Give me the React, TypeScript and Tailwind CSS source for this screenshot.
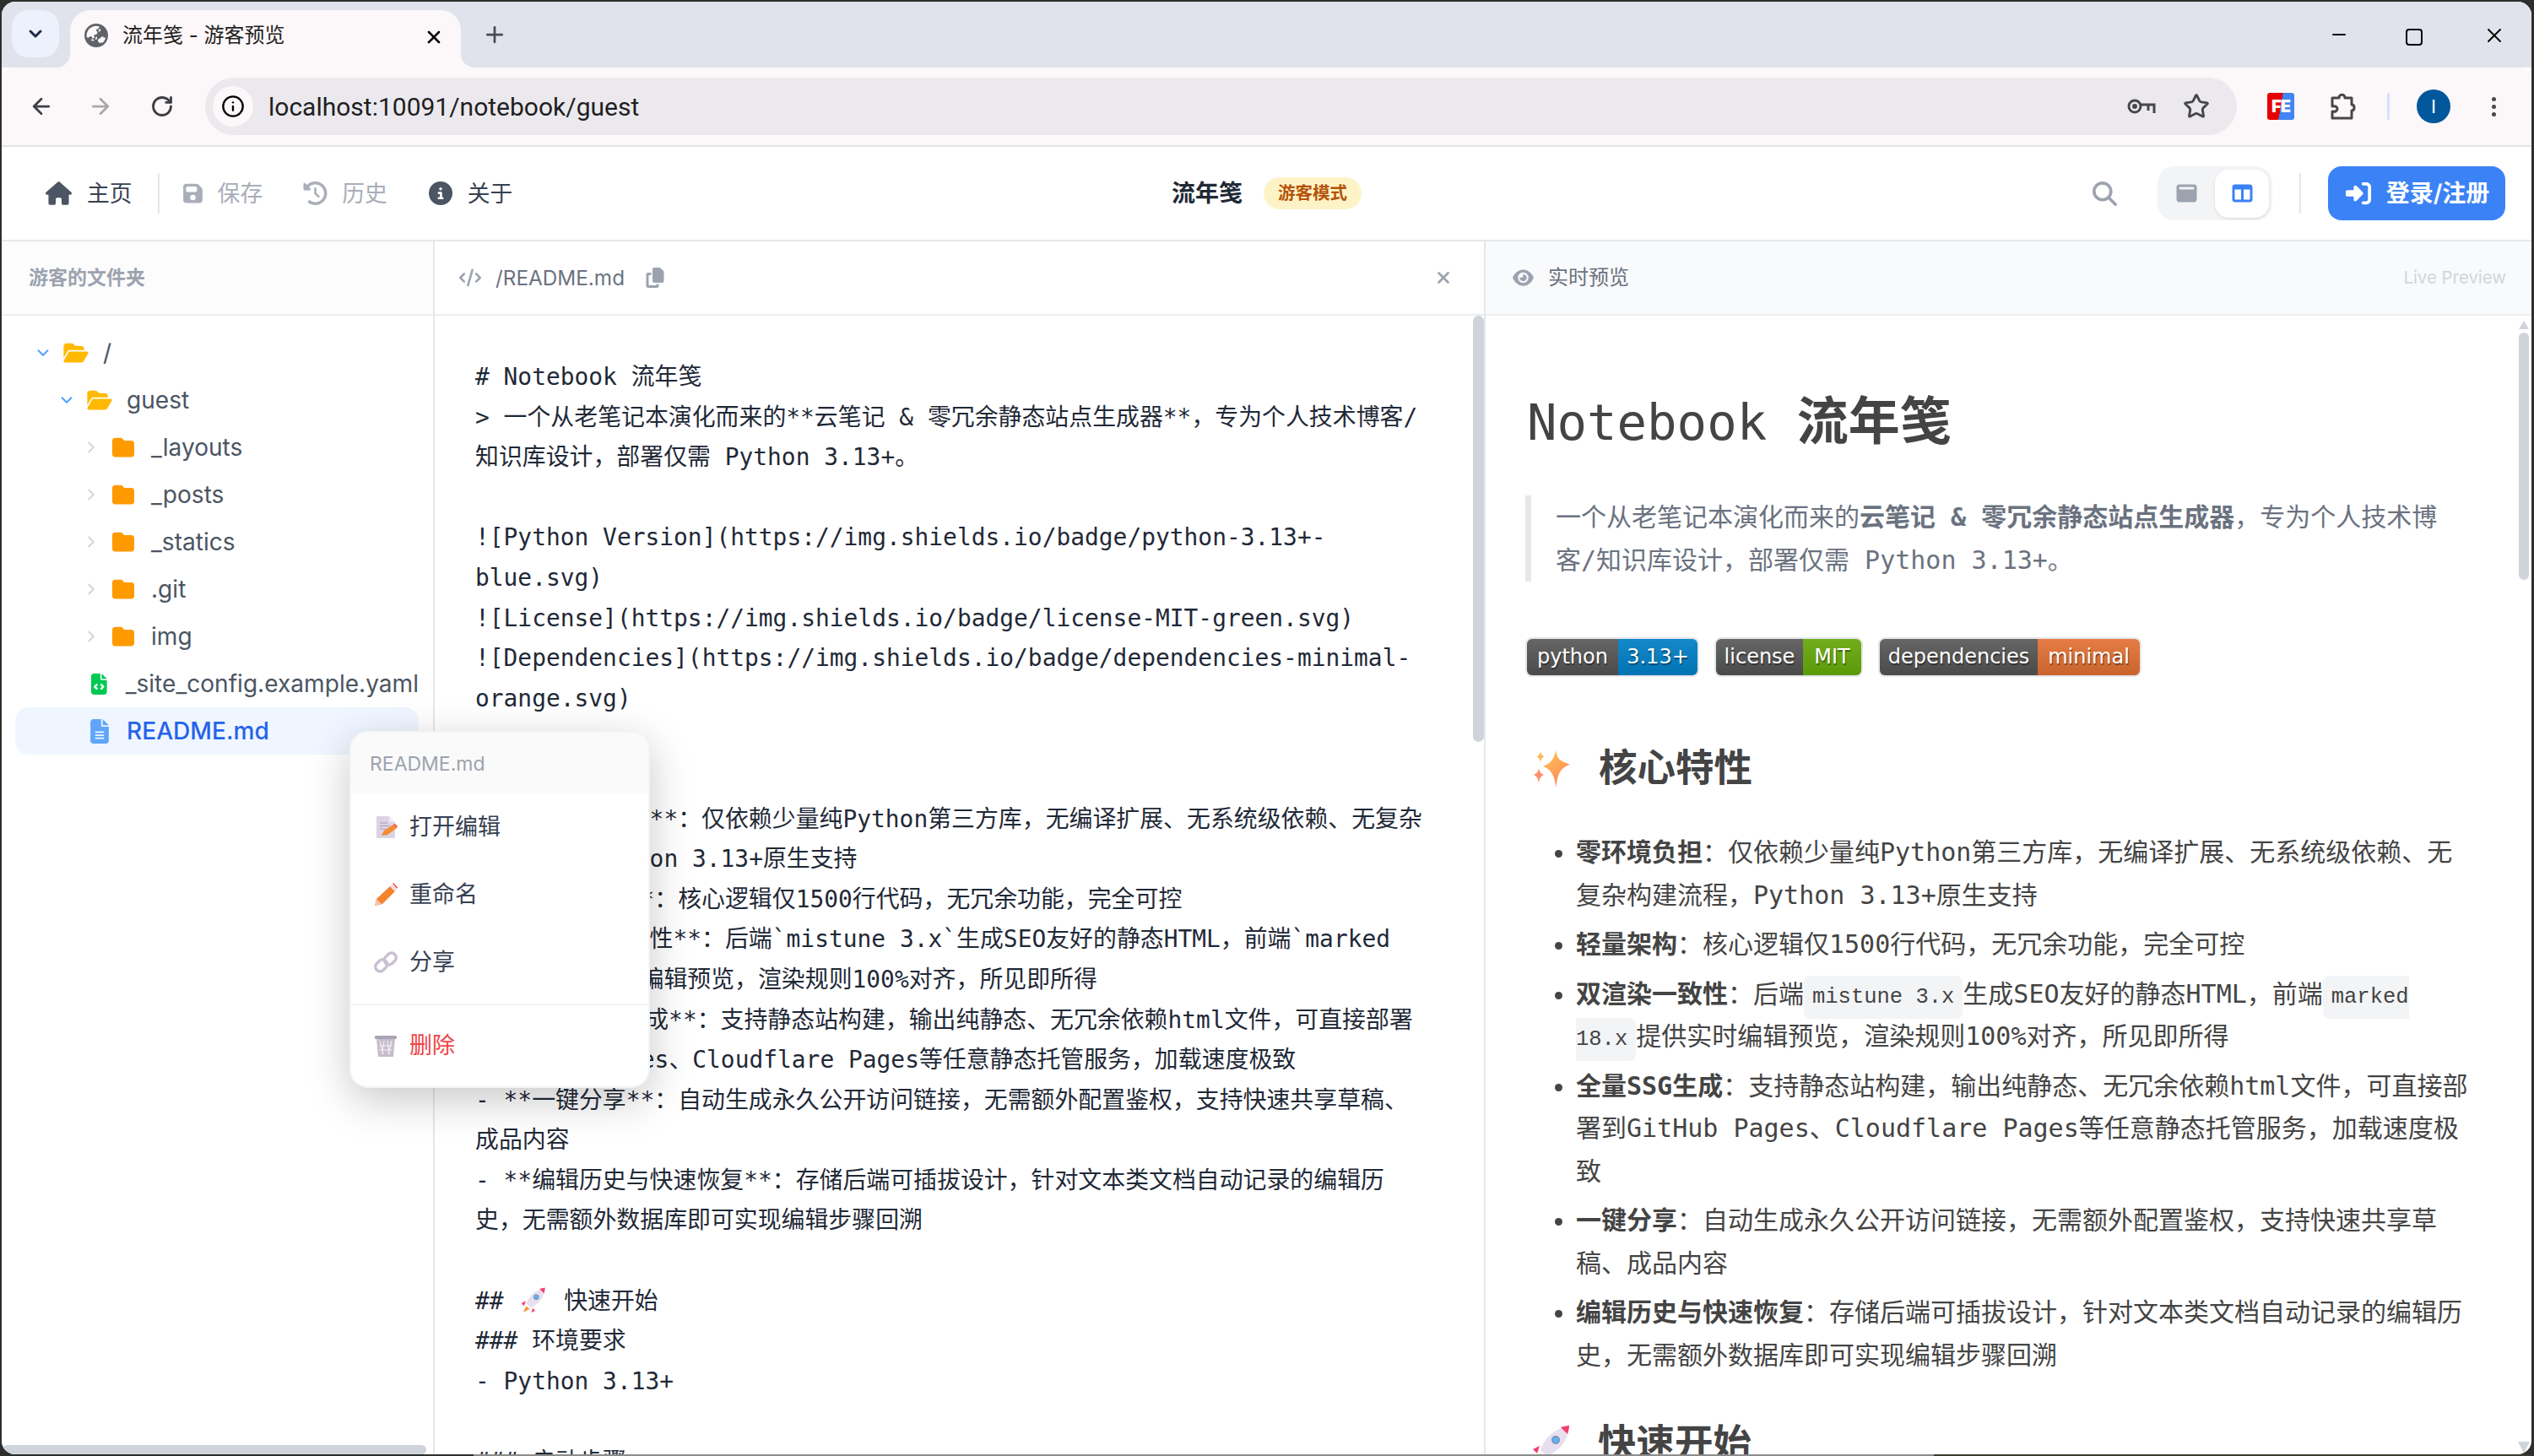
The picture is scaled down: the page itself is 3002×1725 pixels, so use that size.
import { ChevronDown, ChevronRight, ArrowLeft, ArrowRight, RotateCw, Info, Star, Plus, X, Minus } from 'lucide-react'
import {
  FaHouse,
  FaFloppyDisk,
  FaClockRotateLeft,
  FaCircleInfo,
  FaMagnifyingGlass,
  FaRightToBracket,
  FaCode,
  FaCopy,
  FaEye,
  FaFolder,
  FaFolderOpen,
  FaFileCode,
  FaFileLines,
  FaWindowMaximize,
  FaTableColumns,
  FaXmark,
  FaEarthAsia,
} from 'react-icons/fa6'
import type { ReactNode } from 'react'

function Sparkle({ className }: { className?: string }) {
  return (
    <svg viewBox="0 0 44 44" className={className}>
      <defs>
        <linearGradient id="spark" x1="0" y1="0" x2="0.6" y2="1">
          <stop offset="0" stopColor="#fdc64e" />
          <stop offset="1" stopColor="#ff8a5c" />
        </linearGradient>
      </defs>
      <path d="M27 0c1.600 9 4 12.500 17 16.500-10 4.500-14.500 8-16.500 27.500C25 28 21 22 12 19c9-4 13-8 15-19z" fill="url(#spark)" />
      <path d="M9 1c.7 3.500 1.500 4.800 4.500 6.500C10.500 9 9.800 10.500 9 14 8.200 10.500 7.500 9 4.500 7.500 7.500 5.800 8.300 4.500 9 1z" fill="#fdb85a" />
      <path d="M7 21c.9 4.500 2 6 6 8-4 2-5.100 4-6 10-.9-6-2-8-6-10 4-2 5.100-3.500 6-8z" fill="#ff8f6b" />
    </svg>
  )
}

function Rocket({ className }: { className?: string }) {
  return (
    <svg viewBox="0 0 46 46" className={className}>
      <path d="M4 46l6-12 6 6z" fill="#f59a3c" />
      <path d="M9 25L1 29l5 5z" fill="#f43f6e" />
      <path d="M22 38l-3 8 7-3z" fill="#f43f6e" />
      <path d="M10 30C14 16 26 5 44 1c-1 18-12 30-26 36z" fill="#e7dfee" />
      <path d="M34 3c3-1 7-2 10-2 0 3-1 7-2 10z" fill="#f43f6e" />
      <circle cx="28" cy="18" r="5" fill="#7c8db5" />
      <circle cx="28" cy="18" r="3.500" fill="#5cb3f7" />
    </svg>
  )
}

function DocPen() {
  return (
    <svg viewBox="0 0 28 28" className="h-[28px] w-[28px]">
      <path d="M3 1h15l7 7v19H3z" fill="#dcd3e4" />
      <path d="M18 1l7 7h-7z" fill="#f1ecf5" />
      <path d="M7 9h9M7 12.500h12M7 16h7" stroke="#a89bb5" strokeWidth="1.200" />
      <path d="M9 24l3-6 11-7 4 4-11 8z" fill="#f58a2e" />
      <path d="M23 11l2-1 3 3-1 2z" fill="#f4573f" />
    </svg>
  )
}

function Pencil() {
  return (
    <svg viewBox="0 0 28 28" className="h-[28px] w-[28px]">
      <path d="M1 27l2-8L19 4l6 6-15 15z" fill="#f5842e" />
      <path d="M1 27l2-8 6 6z" fill="#f3c4b3" />
      <path d="M19 4l2-2 6 6-2 2z" fill="#e8dfe9" />
      <path d="M22 1l1-1 5 5-1 2z" fill="#f4573f" />
    </svg>
  )
}

function ChainLink() {
  return (
    <svg viewBox="0 0 28 28" className="h-[28px] w-[28px]" fill="none" stroke="#c9bfd2" strokeWidth="3.500">
      <rect x="1" y="13" width="15" height="11" rx="5.500" transform="rotate(-45 8 18)" />
      <rect x="12" y="4" width="15" height="11" rx="5.500" transform="rotate(-45 20 10)" />
    </svg>
  )
}

function Basket() {
  return (
    <svg viewBox="0 0 28 28" className="h-[28px] w-[28px]">
      <path d="M3 5h22l-2 22H5z" fill="#c5bdcd" />
      <path d="M7 8l4 16M12 8l-2 16M16 8l2 16M21 8l-4 16M6 14h16M6 19h16" stroke="#f1edf4" strokeWidth="1.200" />
      <rect x="1" y="2" width="26" height="4" rx="1.500" fill="#aaa2b5" />
    </svg>
  )
}

type TreeItem = {
  name: string
  kind: 'root' | 'open' | 'closed' | 'yaml' | 'md'
  pad: string
}

const tree: TreeItem[] = [
  { name: '/', kind: 'root', pad: 'pl-[38px]' },
  { name: 'guest', kind: 'open', pad: 'pl-[66px]' },
  { name: '_layouts', kind: 'closed', pad: 'pl-[100px]' },
  { name: '_posts', kind: 'closed', pad: 'pl-[100px]' },
  { name: '_statics', kind: 'closed', pad: 'pl-[100px]' },
  { name: '.git', kind: 'closed', pad: 'pl-[100px]' },
  { name: 'img', kind: 'closed', pad: 'pl-[100px]' },
  { name: '_site_config.example.yaml', kind: 'yaml', pad: 'pl-[106px]' },
]

function TreeRow({ item }: { item: TreeItem }) {
  if (item.kind === 'root' || item.kind === 'open') {
    return (
      <div className={`flex h-[56px] items-center ${item.pad}`}>
        <ChevronDown className="mr-[12px] h-[22px] w-[22px] text-blue-400" strokeWidth={2.2} />
        <FaFolderOpen className="mr-[16px] h-[26px] w-[32px] text-amber-400" />
        <span>{item.name}</span>
      </div>
    )
  }
  if (item.kind === 'closed') {
    return (
      <div className={`flex h-[56px] items-center ${item.pad}`}>
        <ChevronRight className="mr-[13px] -ml-[5px] h-[22px] w-[22px] text-gray-300" strokeWidth={2} />
        <FaFolder className="mr-[19px] h-[26px] w-[28px] text-amber-500" />
        <span>{item.name}</span>
      </div>
    )
  }
  return (
    <div className={`flex h-[56px] items-center whitespace-nowrap ${item.pad}`}>
      <FaFileCode className="mr-[22px] h-[29px] w-[22px] text-green-500" />
      <span>{item.name}</span>
    </div>
  )
}

const editorLines: ReactNode[] = [
  '# Notebook 流年笺',
  '> 一个从老笔记本演化而来的**云笔记 & 零冗余静态站点生成器**，专为个人技术博客/',
  '知识库设计，部署仅需 Python 3.13+。',
  '',
  '![Python Version](https://img.shields.io/badge/python-3.13+-',
  'blue.svg)',
  '![License](https://img.shields.io/badge/license-MIT-green.svg)',
  '![Dependencies](https://img.shields.io/badge/dependencies-minimal-',
  'orange.svg)',
  '',
  '## ✦ 核心特性',
  '- **零环境负担**：仅依赖少量纯Python第三方库，无编译扩展、无系统级依赖、无复杂',
  '构建流程，Python 3.13+原生支持',
  '- **轻量架构**：核心逻辑仅1500行代码，无冗余功能，完全可控',
  '- **双渲染一致性**：后端`mistune 3.x`生成SEO友好的静态HTML，前端`marked',
  '18.x`提供实时编辑预览，渲染规则100%对齐，所见即所得',
  '- **全量SSG生成**：支持静态站构建，输出纯静态、无冗余依赖html文件，可直接部署',
  '到GitHub Pages、Cloudflare Pages等任意静态托管服务，加载速度极致',
  '- **一键分享**：自动生成永久公开访问链接，无需额外配置鉴权，支持快速共享草稿、',
  '成品内容',
  '- **编辑历史与快速恢复**：存储后端可插拔设计，针对文本类文档自动记录的编辑历',
  '史，无需额外数据库即可实现编辑步骤回溯',
  '',
  <>
    ## <Rocket className="mx-[4px] inline h-[30px] w-[30px] align-[-4px]" /> 快速开始
  </>,
  '### 环境要求',
  '- Python 3.13+',
  '',
  '### 启动步骤',
]

const badges = [
  { left: 'python', right: '3.13+', leftW: 'w-[108px]', rightW: 'w-[94px]', rightBg: 'bg-gradient-to-b from-[#1488c9] to-[#0073b3]' },
  { left: 'license', right: 'MIT', leftW: 'w-[103px]', rightW: 'w-[69px]', rightBg: 'bg-gradient-to-b from-[#72ad1c] to-[#5a9a06]' },
  { left: 'dependencies', right: 'minimal', leftW: 'w-[187px]', rightW: 'w-[121px]', rightBg: 'bg-gradient-to-b from-[#e57c44] to-[#c9642e]' },
]

const code = 'rounded-[8px] bg-gray-100 px-[10px] py-[11px] text-[25.5px] leading-none'

export default function App() {
  return (
    <div
      lang="zh-CN"
      className="flex h-[1725px] w-[3002px] flex-col overflow-hidden bg-[#2e2e2c] pt-[2px] pl-[2px] pr-[3px] text-[#1f2937] [font-family:'Inter','Noto_Sans_CJK_SC',sans-serif]"
    >
      <div className="flex h-[1721px] shrink-0 flex-col overflow-hidden rounded-[16px] bg-white">
        {/* tab strip */}
        <div className="flex h-[78px] shrink-0 items-start bg-[#e0e3eb]">
          <div className="mt-[10px] ml-[12px] flex h-[56px] w-[56px] items-center justify-center rounded-[20px] bg-[#edf1fc]">
            <ChevronDown className="h-[24px] w-[24px] text-[#1f2a44]" strokeWidth={3} />
          </div>
          <div className="relative mt-[10px] ml-[13px] flex h-[68px] w-[463px] items-center rounded-t-[24px] bg-[#fcf7f8] pb-[8px]">
            <span className="absolute -bottom-0 -left-[16px] h-[16px] w-[16px] bg-[#fcf7f8]">
              <span className="block h-full w-full rounded-br-[16px] bg-[#e0e3eb]" />
            </span>
            <span className="absolute -bottom-0 -right-[16px] h-[16px] w-[16px] bg-[#fcf7f8]">
              <span className="block h-full w-full rounded-bl-[16px] bg-[#e0e3eb]" />
            </span>
            <FaEarthAsia className="ml-[17px] h-[28px] w-[28px] text-[#5f6368]" />
            <span className="ml-[17px] text-[24px] text-[#1f1f1f]">流年笺 - 游客预览</span>
            <X className="absolute right-[20px] top-[20px] h-[24px] w-[24px] text-black" strokeWidth={2.6} />
          </div>
          <Plus className="mt-[24px] ml-[25px] h-[30px] w-[30px] text-[#474b57]" strokeWidth={2.2} />
          <div className="ml-auto flex items-center">
            <Minus className="mt-[24px] mr-[67px] h-[24px] w-[24px] text-black" strokeWidth={2} />
            <div className="mt-[29px] mr-[71px] h-[20px] w-[20px] rounded-[4px] border-2 border-black" />
            <X className="mt-[26px] mr-[30px] h-[28px] w-[28px] text-black" strokeWidth={1.6} />
          </div>
        </div>

        {/* browser toolbar */}
        <div className="flex h-[94px] shrink-0 items-center rounded-t-[14px] border-b-2 border-[#e3e1e6] bg-[#fcf7f8]">
          <ArrowLeft className="ml-[32px] h-[30px] w-[30px] text-[#3c3f46]" strokeWidth={2.2} />
          <ArrowRight className="ml-[40px] h-[30px] w-[30px] text-[#a8a8ab]" strokeWidth={2.2} />
          <RotateCw className="ml-[44px] h-[28px] w-[28px] text-[#3c3f46]" strokeWidth={2.4} />
          <div className="ml-[37px] flex h-[68px] w-[2407px] items-center rounded-full bg-[#ebe9ee]">
            <div className="ml-[9px] flex h-[48px] w-[48px] items-center justify-center rounded-full bg-[#fcf7f8]">
              <Info className="h-[28px] w-[28px] text-black" strokeWidth={2} />
            </div>
            <span className="ml-[18px] text-[30px] text-[#1f1f1f] [font-family:'Roboto',sans-serif]">
              localhost:10091/notebook/guest
            </span>
            <svg viewBox="0 0 34 22" className="ml-auto h-[22px] w-[34px]" fill="none" stroke="#474747" strokeWidth="3">
              <circle cx="9" cy="11" r="7" />
              <circle cx="9" cy="11" r="1.500" fill="#474747" />
              <path d="M16 9h16v10M25 9v7" />
            </svg>
            <Star className="mr-[32px] ml-[32px] h-[32px] w-[32px] text-[#474747]" strokeWidth={2.2} />
          </div>
          <div className="ml-[36px] flex h-[32px] w-[32px] items-center justify-center rounded-[3px] bg-[linear-gradient(100deg,#e60000_50%,#4285f4_50%)] text-[20px] leading-none font-black tracking-[-1px] text-white">
            FE
          </div>
          <svg viewBox="0 0 32 32" className="ml-[42px] h-[32px] w-[32px]" fill="none" stroke="#474747" strokeWidth="3" strokeLinejoin="round">
            <path d="M3 6h8c0-5 7-5 7 0h8v8c4 0 4 7 0 7v9H3v-8c4 1 6-1 6-3s-2-4-6-3z" />
          </svg>
          <div className="ml-[36px] h-[32px] w-[3px] rounded-full bg-[#d3e3fd]" />
          <div className="ml-[32px] flex h-[40px] w-[40px] items-center justify-center rounded-full bg-[#00579c] text-[22px] text-white [font-family:'Roboto',sans-serif]">
            I
          </div>
          <div className="ml-[49px] flex flex-col gap-[4px]">
            <span className="h-[5px] w-[5px] rounded-full bg-[#474747]" />
            <span className="h-[5px] w-[5px] rounded-full bg-[#474747]" />
            <span className="h-[5px] w-[5px] rounded-full bg-[#474747]" />
          </div>
        </div>

        {/* app navbar */}
        <div className="grid h-[112px] shrink-0 grid-cols-[1fr_auto_1fr] items-center border-b-2 border-[#e5e7eb] bg-white text-[26.800px] text-[#374151] shadow-[0_2px_3px_rgba(0,0,0,0.03)]">
          <div className="flex items-center pl-[52px]">
            <FaHouse className="h-[28px] w-[31px] text-[#4b5563]" />
            <span className="ml-[18px]">主页</span>
            <div className="ml-[30px] h-[48px] w-[2px] bg-[#e5e7eb]" />
            <FaFloppyDisk className="ml-[27px] h-[26px] w-[25px] text-[#a9aeb8]" />
            <span className="ml-[17px] text-[#a9aeb8]">保存</span>
            <FaClockRotateLeft className="ml-[48px] h-[28px] w-[29px] text-[#a9aeb8]" />
            <span className="ml-[17px] text-[#a9aeb8]">历史</span>
            <FaCircleInfo className="ml-[49px] h-[28px] w-[28px] text-[#4b5563]" />
            <span className="ml-[18px]">关于</span>
          </div>
          <div className="flex items-center">
            <span className="text-[28px] font-bold text-[#1f2937]">流年笺</span>
            <span className="ml-[25px] flex h-[38px] w-[116px] items-center justify-center rounded-full bg-[#fef3c7] text-[20.500px] font-bold text-[#b45309]">
              游客模式
            </span>
          </div>
          <div className="flex items-center justify-end pr-[31px]">
            <FaMagnifyingGlass className="h-[29px] w-[29px] text-[#9ca3af]" />
            <div className="ml-[48px] flex h-[64px] w-[136px] items-center rounded-[20px] bg-[#f3f4f6]">
              <div className="flex h-[57px] w-[68px] items-center justify-center">
                <FaWindowMaximize className="h-[24px] w-[25px] text-[#9ca3af]" />
              </div>
              <div className="flex h-[57px] w-[64px] items-center justify-center rounded-[16px] bg-white shadow-sm">
                <FaTableColumns className="h-[24px] w-[25px] text-[#3b82f6]" />
              </div>
            </div>
            <div className="ml-[32px] h-[48px] w-[2px] bg-[#e5e7eb]" />
            <div className="ml-[32px] flex h-[64px] w-[210px] items-center justify-center rounded-[16px] bg-[#3b82f6] text-[28px] font-semibold text-white">
              <FaRightToBracket className="mr-[16px] h-[30px] w-[34px]" />
              登录/注册
            </div>
          </div>
        </div>

        {/* panels */}
        <div className="flex min-h-0 flex-1">
          <aside className="relative flex w-[513px] shrink-0 flex-col border-r-2 border-[#e5e7eb] bg-white">
            <div className="flex h-[88px] shrink-0 items-center border-b-2 border-[#eceef1] bg-[#fcfcfd] pl-[32px] text-[23px] font-semibold text-[#9ca3af]">
              游客的文件夹
            </div>
            <div className="pt-[16px] pr-[17px] text-[28.100px] text-[#4b5563]">
              {tree.map((item) => (
                <TreeRow key={item.name} item={item} />
              ))}
              <div className="ml-[16px] flex h-[56px] items-center rounded-[16px] bg-[#eff6ff] pl-[89px] font-medium text-[#2563eb]">
                <FaFileLines className="mr-[21px] h-[29px] w-[22px] text-[#60a5fa]" />
                README.md
              </div>
            </div>
            <div className="mt-auto ml-[1px] mr-[8px] h-[11px] rounded-full bg-[#cfd3da]" />
          </aside>

          <section className="relative flex w-[1243px] shrink-0 flex-col">
            <div className="flex h-[88px] shrink-0 items-center border-b-2 border-[#eceef1] bg-white pl-[29px] text-[#6b7280]">
              <FaCode className="h-[24px] w-[26px] text-[#9ca3af]" />
              <span className="ml-[17px] text-[24.300px]">/README.md</span>
              <FaCopy className="ml-[25px] h-[24px] w-[22px] text-[#9ca3af]" />
              <FaXmark className="mr-[37px] ml-auto h-[22px] w-[22px] text-[#9ca3af]" />
            </div>
            <div className="relative min-h-0 flex-1 overflow-hidden pt-[49px] pl-[48px] text-[27.900px] leading-[47.600px] text-[#1f2937] [font-family:'DejaVu_Sans_Mono','Noto_Sans_CJK_SC',monospace]">
              {editorLines.map((line, i) => (
                <div key={i} className="h-[47.600px] whitespace-pre">
                  {line}
                </div>
              ))}
              <div className="absolute top-0 right-0 h-[505px] w-[13px] rounded-full bg-[#cfd3da]" />
            </div>
          </section>

          <section className="relative flex min-w-0 flex-1 flex-col border-l-2 border-[#e5e7eb]">
            <div className="flex h-[88px] shrink-0 items-center border-b-2 border-[#eceef1] bg-[#f9fafb] pl-[31px] pr-[30px]">
              <FaEye className="h-[22px] w-[27px] text-[#9ca3af]" />
              <span className="ml-[16px] text-[24px] text-[#6b7280]">实时预览</span>
              <span className="ml-auto text-[20.400px] text-[#d1d5db]">Live Preview</span>
            </div>
            <div className="relative min-h-0 flex-1 overflow-hidden pl-[49px] text-[30px] leading-[50.500px] text-[#444444] [font-family:'DejaVu_Sans_Mono','Noto_Sans_CJK_SC',monospace]">
              <h1 className="mt-[90px] h-[72px] text-[59px] leading-[72px] whitespace-pre">
                Notebook <span className="text-[61px] font-bold">流年笺</span>
              </h1>
              <blockquote className="mt-[51px] -ml-[2px] border-l-[7px] border-[#e5e7eb] pl-[29px] leading-[51px] whitespace-pre text-[#6b7280]">
                一个从老笔记本演化而来的<strong>云笔记 &amp; 零冗余静态站点生成器</strong>，专为个人技术博
                <br />
                客/知识库设计，部署仅需 Python 3.13+。
              </blockquote>
              <div className="mt-[66px] -ml-[2px] flex h-[47px] gap-[18px] text-[24px] text-white [font-family:'DejaVu_Sans',sans-serif] [text-shadow:1px_2px_1px_rgba(0,0,0,0.4)]">
                {badges.map((b) => (
                  <div key={b.left} className="flex overflow-hidden rounded-[8px] border-2 border-[#e5e7eb]">
                    <div className={`flex items-center justify-center bg-gradient-to-b from-[#666666] to-[#4a4a4a] ${b.leftW}`}>{b.left}</div>
                    <div className={`flex items-center justify-center ${b.rightBg} ${b.rightW}`}>{b.right}</div>
                  </div>
                ))}
              </div>
              <h2 className="mt-[79px] flex h-[60px] items-center text-[45.500px] font-bold">
                <Sparkle className="mr-[34px] ml-[7px] h-[44px] w-[44px]" />
                <span>核心特性</span>
              </h2>
              <ul className="mt-[44px] list-disc space-y-[8px] pl-[58px] whitespace-pre">
                <li>
                  <strong>零环境负担</strong>：仅依赖少量纯Python第三方库，无编译扩展、无系统级依赖、无
                  <br />
                  复杂构建流程，Python 3.13+原生支持
                </li>
                <li>
                  <strong>轻量架构</strong>：核心逻辑仅1500行代码，无冗余功能，完全可控
                </li>
                <li>
                  <strong>双渲染一致性</strong>：后端<code className={code}>mistune 3.x</code>生成SEO友好的静态HTML，前端
                  <code className={code}>
                    marked
                    <br />
                    18.x
                  </code>
                  提供实时编辑预览，渲染规则100%对齐，所见即所得
                </li>
                <li>
                  <strong>全量SSG生成</strong>：支持静态站构建，输出纯静态、无冗余依赖html文件，可直接部
                  <br />
                  署到GitHub Pages、Cloudflare Pages等任意静态托管服务，加载速度极
                  <br />致
                </li>
                <li>
                  <strong>一键分享</strong>：自动生成永久公开访问链接，无需额外配置鉴权，支持快速共享草
                  <br />
                  稿、成品内容
                </li>
                <li>
                  <strong>编辑历史与快速恢复</strong>：存储后端可插拔设计，针对文本类文档自动记录的编辑历
                  <br />
                  史，无需额外数据库即可实现编辑步骤回溯
                </li>
              </ul>
              <h2 className="mt-[50px] flex h-[60px] items-center text-[45.500px] font-bold">
                <Rocket className="mr-[32px] ml-[6px] h-[46px] w-[46px]" />
                <span>快速开始</span>
              </h2>
              <div className="absolute top-[6px] right-[3px] h-0 w-0 border-x-[6px] border-b-[10px] border-x-transparent border-b-[#cfd3da]" />
              <div className="absolute top-[20px] right-[3px] h-[293px] w-[12px] rounded-full bg-[#cfd3da]" />
              <div className="absolute right-[2px] bottom-[1px] h-0 w-0 border-x-[7px] border-t-[14px] border-x-transparent border-t-[#cfd3da]" />
            </div>
          </section>
        </div>
      </div>

      {/* wallpaper showing under the window edge */}
      <div className="flex h-[2px] shrink-0">
        <div className="w-[559px] bg-[#2e2e2c]" />
        <div className="w-[1730px] bg-[#8d8d8d]" />
        <div className="flex-1 bg-[#3d3c30]" />
      </div>

      {/* right-click menu on README.md */}
      <div className="absolute top-[866px] left-[414px] w-[356px] overflow-hidden rounded-[22px] border-2 border-[#f3f4f6] bg-white shadow-[0_14px_50px_rgba(0,0,0,0.22)]">
        <div className="flex h-[72px] items-center bg-[#fafafa] pt-[2px] pl-[22px] text-[23px] text-[#9ca3af]">README.md</div>
        <div className="text-[27px] text-[#374151]">
          <div className="flex h-[80px] items-center pl-[27px]">
            <DocPen />
            <span className="ml-[14px]">打开编辑</span>
          </div>
          <div className="flex h-[80px] items-center pl-[27px]">
            <Pencil />
            <span className="ml-[14px]">重命名</span>
          </div>
          <div className="flex h-[80px] items-center pl-[27px]">
            <ChainLink />
            <span className="ml-[14px]">分享</span>
          </div>
          <div className="mt-[9px] flex h-[98px] items-center border-t-2 border-[#f3f4f6] pl-[27px] text-[#ef4444]">
            <Basket />
            <span className="ml-[14px]">删除</span>
          </div>
        </div>
      </div>
    </div>
  )
}
